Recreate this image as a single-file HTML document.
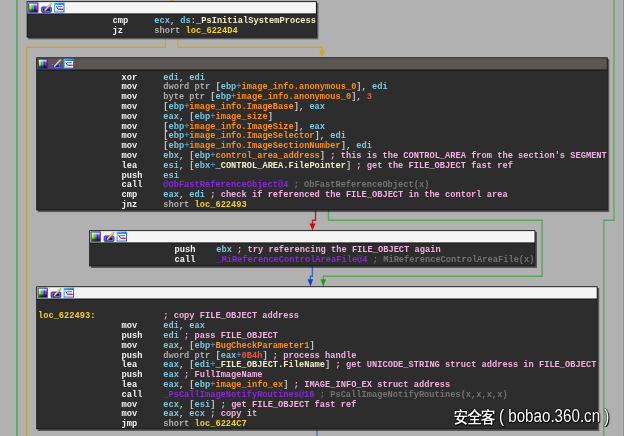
<!DOCTYPE html><html><head><meta charset="utf-8"><title>IDA graph</title><style>
html,body{margin:0;padding:0}
body{width:624px;height:436px;overflow:hidden;background:#b1b1b1;position:relative;font-family:"Liberation Mono",monospace;}
svg.g{position:absolute;left:0;top:0}
pre{position:absolute;margin:0;font-family:"Liberation Mono",monospace;font-weight:bold;font-size:9.6px;line-height:9.82px;letter-spacing:0;transform:scaleX(.90625);transform-origin:0 0;color:#c8c8c8;white-space:pre}
.m{color:#f2f2f2} .r{color:#7cc6de} .k{color:#ababab} .p{color:#c4c4c4} .o{color:#4c86b8}
.i{color:#ff8e0c} .c{color:#f2aee0} .d{color:#727272} .f{color:#8628d4} .l{color:#f4d21c} .n{color:#e45a3a} .s{color:#f0ecc8}
.wm{position:absolute;color:#fff;white-space:pre;text-shadow:1px 1px 1px #000,0 0 2px #000,0 0 2px #111;transform-origin:0 0}
.wm1{left:453.6px;top:407.8px;font-family:"Liberation Sans","Noto Sans CJK SC",sans-serif;font-size:14.7px;letter-spacing:-1.1px;font-weight:500;line-height:18px;transform:scaleY(1.05)}
.wm2{left:499px;top:405.2px;font-family:"Liberation Sans",sans-serif;font-size:17.5px;line-height:22px;transform:scaleX(.866)}
</style></head><body>
<svg class="g" width="624" height="436" viewBox="0 0 624 436">
<defs>
<linearGradient id="rb" x1="0" x2="1" y1="0" y2="0"><stop offset="0" stop-color="#ffb000"/><stop offset=".1" stop-color="#fff000"/><stop offset=".36" stop-color="#10e010"/><stop offset=".52" stop-color="#10c8d8"/><stop offset=".68" stop-color="#2020ff"/><stop offset=".88" stop-color="#ff10e0"/><stop offset="1" stop-color="#a00070"/></linearGradient>
<linearGradient id="bk" x1="0" x2="0" y1="0" y2="1"><stop offset="0" stop-color="#fff" stop-opacity=".9"/><stop offset=".38" stop-color="#fff" stop-opacity="0"/><stop offset=".55" stop-color="#000" stop-opacity="0"/><stop offset="1" stop-color="#000" stop-opacity=".95"/></linearGradient>
<linearGradient id="wb" x1="0" x2="1" y1="0" y2="1"><stop offset="0" stop-color="#48c8ff"/><stop offset=".5" stop-color="#3080f0"/><stop offset="1" stop-color="#2858d8"/></linearGradient>
<filter id="sh" x="-5%" y="-20%" width="110%" height="140%"><feGaussianBlur stdDeviation="0.75"/></filter>
</defs>
<g fill="none" stroke-width="1.4">
<path d="M16.9 0V436" stroke="#5ca863" stroke-width="1.7"/>
<path d="M623.9 0V436" stroke="#5ca863"/>
<path d="M614 0V220.3H603.9V436" stroke="#5ca863"/>
<path d="M26.6 436V47.2H165.5V37" stroke="#c9a240"/>
<path d="M178 37V47.2H322V52" stroke="#c9a240"/>
<path d="M319 50.3H325L322 57.5Z" fill="#d9a21c" stroke="none"/>
<path d="M169.9 0H173.5L171.7 1.6Z" fill="#d9a21c" stroke="none"/>
<path d="M315.5 210V220.2H312.5V225" stroke="#c82020"/>
<path d="M309.5 223.5H315.5L312.5 230.6Z" fill="#cc0c0c" stroke="none"/>
<path d="M328.5 210V220.3H542.1V276.3H323.3V280" stroke="#58a85e"/>
<path d="M320.5 279.3H326.1L323.3 286.6Z" fill="#10a018" stroke="none"/>
<path d="M312.4 266V276.2H310.4V280" stroke="#3866d0"/>
<path d="M307.6 279.3H313.2L310.4 286.6Z" fill="#1040e0" stroke="none"/>
<path d="M317 429V436" stroke="#4870c0"/>
</g>
<rect x="28.30" y="2.90" width="290.10" height="36.40" fill="#000" fill-opacity=".5" filter="url(#sh)"/>
<rect x="26.70" y="1.20" width="290.10" height="36.40" fill="#151515"/>
<rect x="27.50" y="14.40" width="288.50" height="22.40" fill="#2d2d2d"/>
<rect x="27.60" y="2.10" width="288.30" height="11.30" fill="#f5f5f5"/>
<g transform="translate(26.70 1.20)">
<rect x="1.3" y="1.1" width="10.5" height="10.7" rx="1" fill="#2a2aa0" fill-opacity=".8"/>
<rect x="2.6" y="2.5" width="8" height="8" fill="url(#rb)"/><rect x="2.6" y="2.5" width="8" height="8" fill="url(#bk)"/>
<rect x="14.9" y="5.7" width="9.8" height="5.6" rx="1" fill="#1418a8" stroke="#4c50c4" stroke-width="1"/>
<rect x="16" y="6.8" width="7.6" height="3.4" fill="none" stroke="#98a4f0" stroke-width=".6"/>
<path d="M17.1 9.2 L23.1 2.8 L24.4 3.9 L18.4 10.3 Z" fill="#f4a41c" stroke="#7a5210" stroke-width=".3"/><path d="M17.8 8.6 L23.3 2.8 L23.9 3.3 L18.4 9.1 Z" fill="#ffe468"/><path d="M23.1 2.8 L24.2 1.5 L25.6 2.6 L24.4 3.9Z" fill="#68c8e8"/><path d="M17.1 9.2 L18.4 10.3 L16.4 11Z" fill="#503818"/>
<rect x="27.9" y="1.9" width="9.4" height="8.9" fill="#f6faff" stroke="url(#wb)" stroke-width="1"/>
<rect x="27.9" y="1.9" width="9.4" height="1.8" fill="url(#wb)"/>
<path d="M29.6 5 L31.3 8 H33" fill="none" stroke="#2030d8" stroke-width="1"/>
<path d="M30.9 5.4 H35.8" stroke="#3050e0" stroke-width=".9"/>
<rect x="32.5" y="7.3" width="4" height="1.5" fill="#e02828"/>
<path d="M29.6 9.6 H31.5" stroke="#88a0f0" stroke-width=".7"/>
</g>
<rect x="37.80" y="59.00" width="571.50" height="153.10" fill="#000" fill-opacity=".5" filter="url(#sh)"/>
<rect x="36.20" y="57.30" width="571.50" height="153.10" fill="#151515"/>
<rect x="37.00" y="70.50" width="569.90" height="139.10" fill="#2d2d2d"/>
<rect x="37.10" y="58.20" width="569.70" height="11.30" fill="#5b5652"/>
<g transform="translate(36.20 57.30)">
<rect x="1.3" y="1.1" width="10.5" height="10.7" rx="1" fill="#2a2aa0" fill-opacity=".8"/>
<rect x="2.6" y="2.5" width="8" height="8" fill="url(#rb)"/><rect x="2.6" y="2.5" width="8" height="8" fill="url(#bk)"/>
<rect x="14.9" y="5.7" width="9.8" height="5.6" rx="1" fill="#1418a8" stroke="#4c50c4" stroke-width="1"/>
<rect x="16" y="6.8" width="7.6" height="3.4" fill="none" stroke="#98a4f0" stroke-width=".6"/>
<path d="M17.1 9.2 L23.1 2.8 L24.4 3.9 L18.4 10.3 Z" fill="#f4a41c" stroke="#7a5210" stroke-width=".3"/><path d="M17.8 8.6 L23.3 2.8 L23.9 3.3 L18.4 9.1 Z" fill="#ffe468"/><path d="M23.1 2.8 L24.2 1.5 L25.6 2.6 L24.4 3.9Z" fill="#68c8e8"/><path d="M17.1 9.2 L18.4 10.3 L16.4 11Z" fill="#503818"/>
<rect x="27.9" y="1.9" width="9.4" height="8.9" fill="#f6faff" stroke="url(#wb)" stroke-width="1"/>
<rect x="27.9" y="1.9" width="9.4" height="1.8" fill="url(#wb)"/>
<path d="M29.6 5 L31.3 8 H33" fill="none" stroke="#2030d8" stroke-width="1"/>
<path d="M30.9 5.4 H35.8" stroke="#3050e0" stroke-width=".9"/>
<rect x="32.5" y="7.3" width="4" height="1.5" fill="#e02828"/>
<path d="M29.6 9.6 H31.5" stroke="#88a0f0" stroke-width=".7"/>
</g>
<rect x="90.80" y="231.90" width="446.20" height="36.10" fill="#000" fill-opacity=".5" filter="url(#sh)"/>
<rect x="89.20" y="230.20" width="446.20" height="36.10" fill="#151515"/>
<rect x="90.00" y="243.40" width="444.60" height="22.10" fill="#2d2d2d"/>
<rect x="90.10" y="231.10" width="444.40" height="11.30" fill="#f5f5f5"/>
<g transform="translate(89.20 230.20)">
<rect x="1.3" y="1.1" width="10.5" height="10.7" rx="1" fill="#2a2aa0" fill-opacity=".8"/>
<rect x="2.6" y="2.5" width="8" height="8" fill="url(#rb)"/><rect x="2.6" y="2.5" width="8" height="8" fill="url(#bk)"/>
<rect x="14.9" y="5.7" width="9.8" height="5.6" rx="1" fill="#1418a8" stroke="#4c50c4" stroke-width="1"/>
<rect x="16" y="6.8" width="7.6" height="3.4" fill="none" stroke="#98a4f0" stroke-width=".6"/>
<path d="M17.1 9.2 L23.1 2.8 L24.4 3.9 L18.4 10.3 Z" fill="#f4a41c" stroke="#7a5210" stroke-width=".3"/><path d="M17.8 8.6 L23.3 2.8 L23.9 3.3 L18.4 9.1 Z" fill="#ffe468"/><path d="M23.1 2.8 L24.2 1.5 L25.6 2.6 L24.4 3.9Z" fill="#68c8e8"/><path d="M17.1 9.2 L18.4 10.3 L16.4 11Z" fill="#503818"/>
<rect x="27.9" y="1.9" width="9.4" height="8.9" fill="#f6faff" stroke="url(#wb)" stroke-width="1"/>
<rect x="27.9" y="1.9" width="9.4" height="1.8" fill="url(#wb)"/>
<path d="M29.6 5 L31.3 8 H33" fill="none" stroke="#2030d8" stroke-width="1"/>
<path d="M30.9 5.4 H35.8" stroke="#3050e0" stroke-width=".9"/>
<rect x="32.5" y="7.3" width="4" height="1.5" fill="#e02828"/>
<path d="M29.6 9.6 H31.5" stroke="#88a0f0" stroke-width=".7"/>
</g>
<rect x="37.80" y="288.00" width="561.40" height="143.00" fill="#000" fill-opacity=".5" filter="url(#sh)"/>
<rect x="36.20" y="286.30" width="561.40" height="143.00" fill="#151515"/>
<rect x="37.00" y="299.50" width="559.80" height="129.00" fill="#2d2d2d"/>
<rect x="37.10" y="287.20" width="559.60" height="11.30" fill="#f5f5f5"/>
<g transform="translate(36.20 286.30)">
<rect x="1.3" y="1.1" width="10.5" height="10.7" rx="1" fill="#2a2aa0" fill-opacity=".8"/>
<rect x="2.6" y="2.5" width="8" height="8" fill="url(#rb)"/><rect x="2.6" y="2.5" width="8" height="8" fill="url(#bk)"/>
<rect x="14.9" y="5.7" width="9.8" height="5.6" rx="1" fill="#1418a8" stroke="#4c50c4" stroke-width="1"/>
<rect x="16" y="6.8" width="7.6" height="3.4" fill="none" stroke="#98a4f0" stroke-width=".6"/>
<path d="M17.1 9.2 L23.1 2.8 L24.4 3.9 L18.4 10.3 Z" fill="#f4a41c" stroke="#7a5210" stroke-width=".3"/><path d="M17.8 8.6 L23.3 2.8 L23.9 3.3 L18.4 9.1 Z" fill="#ffe468"/><path d="M23.1 2.8 L24.2 1.5 L25.6 2.6 L24.4 3.9Z" fill="#68c8e8"/><path d="M17.1 9.2 L18.4 10.3 L16.4 11Z" fill="#503818"/>
<rect x="27.9" y="1.9" width="9.4" height="8.9" fill="#f6faff" stroke="url(#wb)" stroke-width="1"/>
<rect x="27.9" y="1.9" width="9.4" height="1.8" fill="url(#wb)"/>
<path d="M29.6 5 L31.3 8 H33" fill="none" stroke="#2030d8" stroke-width="1"/>
<path d="M30.9 5.4 H35.8" stroke="#3050e0" stroke-width=".9"/>
<rect x="32.5" y="7.3" width="4" height="1.5" fill="#e02828"/>
<path d="M29.6 9.6 H31.5" stroke="#88a0f0" stroke-width=".7"/>
</g>
</svg>
<pre style="left:28.70px;top:16.40px">                <span class="m">cmp</span>     <span class="r">ecx</span><span class="p">,</span> <span class="r">ds</span><span class="p">:</span><span class="s">_PsInitialSystemProcess</span>
                <span class="m">jz</span>      <span class="k">short</span> <span class="l">loc_6224D4</span></pre>
<pre style="left:38.20px;top:72.50px">                <span class="m">xor</span>     <span class="r">edi</span><span class="p">,</span> <span class="r">edi</span>
                <span class="m">mov</span>     <span class="k">dword</span> <span class="k">ptr</span> <span class="p">[</span><span class="r">ebp</span><span class="o">+</span><span class="i">image_info.anonymous_0</span><span class="p">]</span><span class="p">,</span> <span class="r">edi</span>
                <span class="m">mov</span>     <span class="k">byte</span> <span class="k">ptr</span> <span class="p">[</span><span class="r">ebp</span><span class="o">+</span><span class="i">image_info.anonymous_0</span><span class="p">]</span><span class="p">,</span> <span class="n">3</span>
                <span class="m">mov</span>     <span class="p">[</span><span class="r">ebp</span><span class="o">+</span><span class="i">image_info.ImageBase</span><span class="p">]</span><span class="p">,</span> <span class="r">eax</span>
                <span class="m">mov</span>     <span class="r">eax</span><span class="p">,</span> <span class="p">[</span><span class="r">ebp</span><span class="o">+</span><span class="i">image_size</span><span class="p">]</span>
                <span class="m">mov</span>     <span class="p">[</span><span class="r">ebp</span><span class="o">+</span><span class="i">image_info.ImageSize</span><span class="p">]</span><span class="p">,</span> <span class="r">eax</span>
                <span class="m">mov</span>     <span class="p">[</span><span class="r">ebp</span><span class="o">+</span><span class="i">image_info.ImageSelector</span><span class="p">]</span><span class="p">,</span> <span class="r">edi</span>
                <span class="m">mov</span>     <span class="p">[</span><span class="r">ebp</span><span class="o">+</span><span class="i">image_info.ImageSectionNumber</span><span class="p">]</span><span class="p">,</span> <span class="r">edi</span>
                <span class="m">mov</span>     <span class="r">ebx</span><span class="p">,</span> <span class="p">[</span><span class="r">ebp</span><span class="o">+</span><span class="i">control_area_address</span><span class="p">]</span> <span class="c">; this is the CONTROL_AREA from the section&#x27;s SEGMENT</span>
                <span class="m">lea</span>     <span class="r">esi</span><span class="p">,</span> <span class="p">[</span><span class="r">ebx</span><span class="o">+</span><span class="s">_CONTROL_AREA.FilePointer</span><span class="p">]</span> <span class="c">; get the FILE_OBJECT fast ref</span>
                <span class="m">push</span>    <span class="r">esi</span>
                <span class="m">call</span>    <span class="f">@ObFastReferenceObject@4</span> <span class="d">; ObFastReferenceObject(x)</span>
                <span class="m">cmp</span>     <span class="r">eax</span><span class="p">,</span> <span class="r">edi</span> <span class="c">; check if referenced the FILE_OBJECT in the contorl area</span>
                <span class="m">jnz</span>     <span class="k">short</span> <span class="l">loc_622493</span></pre>
<pre style="left:91.20px;top:245.40px">                <span class="m">push</span>    <span class="r">ebx</span> <span class="c">; try referencing the FILE_OBJECT again</span>
                <span class="m">call</span>    <span class="f">_MiReferenceControlAreaFile@4</span> <span class="d">; MiReferenceControlAreaFile(x)</span></pre>
<pre style="left:38.20px;top:301.50px"> 
<span class="l">loc_622493:</span>             <span class="c">; copy FILE_OBJECT address</span>
                <span class="m">mov</span>     <span class="r">edi</span><span class="p">,</span> <span class="r">eax</span>
                <span class="m">push</span>    <span class="r">edi</span> <span class="c">; pass FILE_OBJECT</span>
                <span class="m">mov</span>     <span class="r">eax</span><span class="p">,</span> <span class="p">[</span><span class="r">ebp</span><span class="o">+</span><span class="i">BugCheckParameter1</span><span class="p">]</span>
                <span class="m">push</span>    <span class="k">dword</span> <span class="k">ptr</span> <span class="p">[</span><span class="r">eax</span><span class="o">+</span><span class="n">0B4h</span><span class="p">]</span> <span class="c">; process handle</span>
                <span class="m">lea</span>     <span class="r">eax</span><span class="p">,</span> <span class="p">[</span><span class="r">edi</span><span class="o">+</span><span class="s">_FILE_OBJECT.FileName</span><span class="p">]</span> <span class="c">; get UNICODE_STRING struct address in FILE_OBJECT</span>
                <span class="m">push</span>    <span class="r">eax</span> <span class="c">; FullImageName</span>
                <span class="m">lea</span>     <span class="r">eax</span><span class="p">,</span> <span class="p">[</span><span class="r">ebp</span><span class="o">+</span><span class="i">image_info_ex</span><span class="p">]</span> <span class="c">; IMAGE_INFO_EX struct address</span>
                <span class="m">call</span>    <span class="f">_PsCallImageNotifyRoutines@16</span> <span class="d">; PsCallImageNotifyRoutines(x,x,x,x)</span>
                <span class="m">mov</span>     <span class="r">ecx</span><span class="p">,</span> <span class="p">[</span><span class="r">esi</span><span class="p">]</span> <span class="c">; get FILE_OBJECT fast ref</span>
                <span class="m">mov</span>     <span class="r">eax</span><span class="p">,</span> <span class="r">ecx</span> <span class="c">; copy it</span>
                <span class="m">jmp</span>     <span class="k">short</span> <span class="l">loc_6224C7</span></pre>
<div class="wm wm1">安全客</div><div class="wm wm2">( bobao.360.cn )</div>
</body></html>
